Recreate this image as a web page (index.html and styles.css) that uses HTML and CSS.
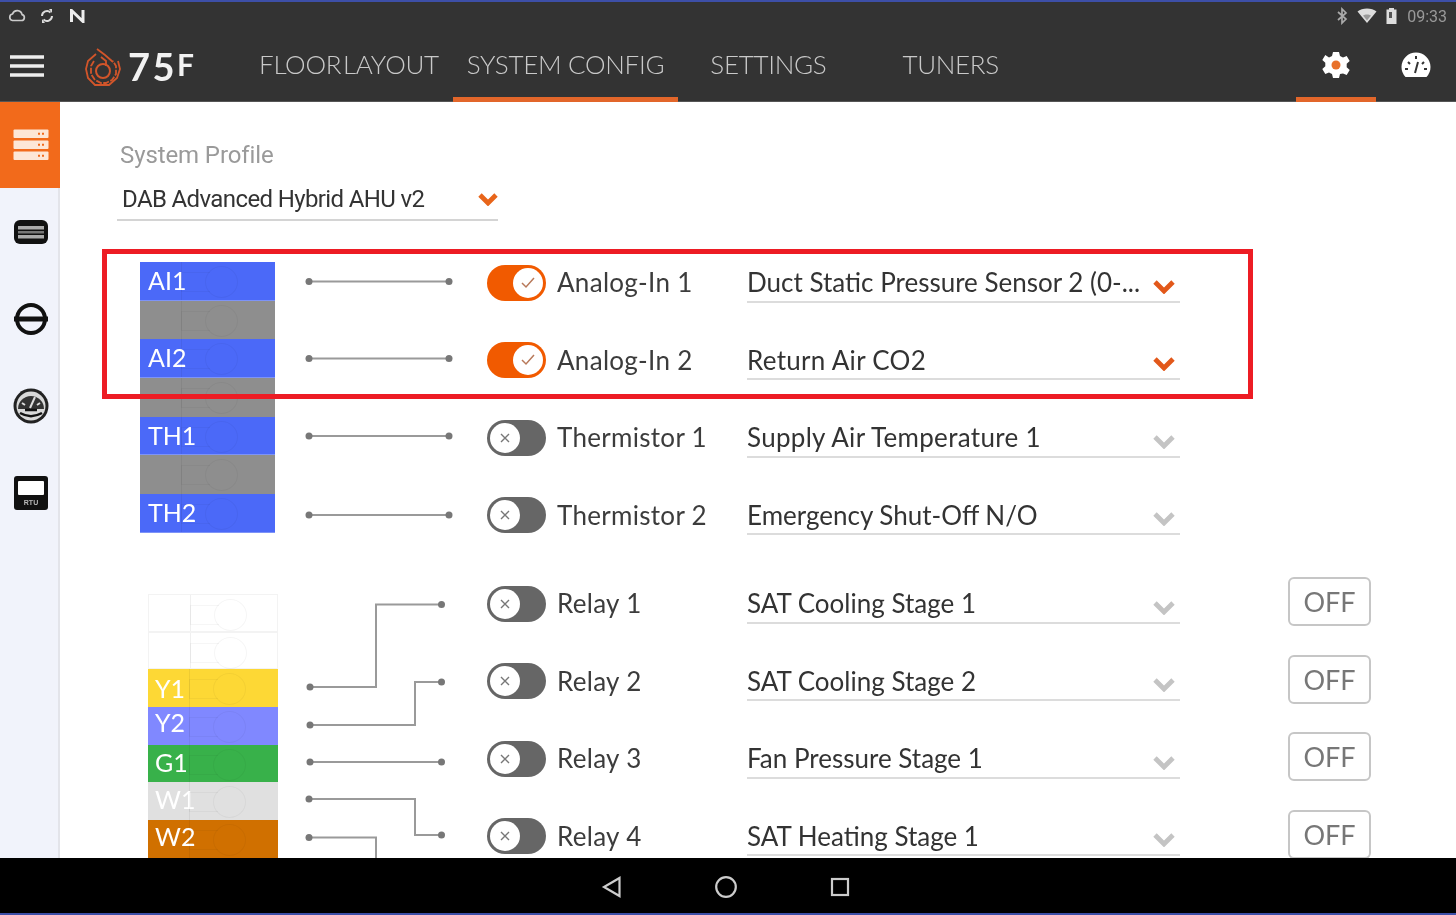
FILE: index.html
```html
<!DOCTYPE html>
<html lang="en">
<head>
<meta charset="utf-8">
<title>75F System Config</title>
<link rel="stylesheet" href="styles.css">
</head>
<body>
<div class="screen">
  <div class="statusbar">
    <div class="status-group">
      <svg class="st-icon" width="18" height="14" viewBox="0 0 18 14"><path d="M4.500 11.500h9a3 3 0 0 0 .6-5.900 5 5 0 0 0-9.600-.6 3.300 3.300 0 0 0 0 6.500z" fill="none" stroke="#ccc" stroke-width="1.700"/></svg>
      <svg class="st-icon" width="16" height="16" viewBox="0 0 16 16"><path d="M3 8a5 5 0 0 1 8.500-3.500M13 8a5 5 0 0 1-8.500 3.500" fill="none" stroke="#ddd" stroke-width="2"/><path d="M10 1l3 0 0 4zM6 15l-3 0 0-4z" fill="#ddd"/></svg>
      <svg class="st-icon st-n" width="16" height="14" viewBox="0 0 16 14"><path d="M1.500 13V1.500L13 12.500V1" fill="none" stroke="#eee" stroke-width="3"/></svg>
    </div>
    <div class="status-group status-right">
      <svg width="12" height="18" viewBox="0 0 12 18"><path d="M2 5l8 7-4 4V2l4 4-8 7" fill="none" stroke="#aaa" stroke-width="1.700"/></svg>
      <svg width="20" height="16" viewBox="0 0 20 16"><path d="M0.500 3.500C5 -0.500 15 -0.500 19.500 3.500L10 15z" fill="#ddd"/><path d="M6 7.500c2-1.500 6-1.500 8 0L10 12.500z" fill="#999"/></svg>
      <svg width="11" height="18" viewBox="0 0 11 18"><path d="M3 1h5v1.500h2.500V17H.5V2.500H3z" fill="#ddd"/><rect x="3" y="5" width="3" height="6" fill="#555"/></svg>
      <span class="clock">09:33</span>
    </div>
  </div>

  <header class="appbar">
    <svg class="menu" width="34" height="22" viewBox="0 0 34 22"><path d="M0 2h34M0 11h34M0 20h34" stroke="#eee" stroke-width="3.600"/></svg>
    <svg class="logo" width="36" height="44" viewBox="0 0 36 44">
      <path d="M12 4l8 6 8 7" fill="none" stroke="#d2552a" stroke-width="1.800"/>
      <path d="M11 9L3 16 1 24l2 9 7 7h14l8-7 3-9-2-8" fill="none" stroke="#d2552a" stroke-width="1.800"/>
      <path d="M9 16l-3 5v8l4 6 6 3h5l6-3 4-6v-8l-3-5" fill="none" stroke="#d2552a" stroke-width="1.800" stroke-dasharray="6 1.500"/>
      <circle cx="18" cy="26" r="7" fill="none" stroke="#d2552a" stroke-width="2"/>
      <path d="M16 12l5 4v5" fill="none" stroke="#d2552a" stroke-width="1.800"/>
    </svg>
    <div class="brand">75<span class="brand-f">F</span></div>
    <nav class="tabs">
      <a class="tab tab-floor">FLOOR LAYOUT</a>
      <a class="tab tab-active">SYSTEM CONFIG</a>
      <a class="tab tab-settings">SETTINGS</a>
      <a class="tab tab-tuners">TUNERS</a>
    </nav>
    <div class="actions">
      <div class="action action-active">
        <svg width="30" height="30" viewBox="0 0 30 30"><path d="M12 2h6l1 4 3 1.500 3.700-1.500 3 5-3 2.700v3.600l3 2.700-3 5-3.700-1.500L19 24l-1 4h-6l-1-4-3-1.500-3.700 1.500-3-5 3-2.700v-3.600l-3-2.700 3-5L8 7.500 11 6z" fill="#fff"/><circle cx="15" cy="15" r="4.500" fill="#e8712a"/></svg>
      </div>
      <div class="action">
        <svg width="30" height="26" viewBox="0 0 30 26"><path d="M4.500 25A14.500 14.500 0 1 1 25.500 25z" fill="#fff"/><path d="M14 21l3-11M7 10l2 2M23 10l-2 2M4 17h3M23 17h3M15 4v3" stroke="#333" stroke-width="2"/></svg>
      </div>
    </div>
  </header>

  <div class="main">
    <aside class="sidebar">
      <div class="side-item side-active">
        <svg width="36" height="32" viewBox="0 0 36 32">
          <rect x="0.500" y="0.500" width="35" height="8.500" rx="1" fill="#fde6d6"/>
          <rect x="0.500" y="11.500" width="35" height="8.500" rx="1" fill="#fde6d6"/>
          <rect x="0.500" y="22.500" width="35" height="8.500" rx="1" fill="#fde6d6"/>
          <path d="M25 4.800h2M29 4.800h2M25 15.800h2M29 15.800h2M25 26.800h2M29 26.800h2" stroke="#f26a1b" stroke-width="2"/>
        </svg>
      </div>
      <div class="side-item">
        <svg width="36" height="26" viewBox="0 0 36 26"><rect x="1" y="1" width="34" height="24" rx="6" fill="#111"/><rect x="5" y="7" width="26" height="3.500" fill="#aaa"/><rect x="5" y="12" width="26" height="2.500" fill="#777"/><rect x="5" y="16" width="26" height="3.500" fill="#aaa"/></svg>
      </div>
      <div class="side-item">
        <svg width="36" height="32" viewBox="0 0 36 32"><circle cx="18" cy="16" r="14" fill="none" stroke="#111" stroke-width="4"/><path d="M1 16h34" stroke="#111" stroke-width="5"/></svg>
      </div>
      <div class="side-item">
        <svg width="36" height="36" viewBox="0 0 36 36"><circle cx="18" cy="18" r="17.500" fill="#222"/><circle cx="18" cy="18" r="14.500" fill="#d8d8d8"/><path d="M5 21a13 13 0 0 1 26 0z" fill="#333"/><path d="M17 20l5-11M9 15l3 2M27 15l-3 2" stroke="#ddd" stroke-width="2"/><path d="M7 25c7 4 15 4 22 0M12 22h12" fill="none" stroke="#111" stroke-width="2.500"/></svg>
      </div>
      <div class="side-item">
        <svg width="36" height="36" viewBox="0 0 36 36"><rect x="1" y="1" width="34" height="34" rx="3" fill="#111"/><rect x="5" y="6" width="26" height="14" rx="1" fill="#fff"/><text x="18" y="30" text-anchor="middle" font-family="Liberation Sans" font-size="7" font-weight="700" fill="#bbb">RTU</text></svg>
      </div>
    </aside>

    <section class="content">
      <div class="profile">
        <div class="profile-label">System Profile</div>
        <div class="profile-select">
          <span>DAB Advanced Hybrid AHU v2</span>
          <svg class="chev" width="20" height="14" viewBox="0 0 20 14"><path d="M2 3l8 8 8-8" fill="none" stroke="#e8651a"/></svg>
        </div>
      </div>

      <div class="group group-analog">
        <div class="strip strip-analog">
          <div class="block blue">AI1</div>
          <div class="block grey"></div>
          <div class="block blue">AI2</div>
          <div class="block grey"></div>
          <div class="block blue">TH1</div>
          <div class="block grey"></div>
          <div class="block blue">TH2</div>
        </div>
        <svg class="wires wires-analog" width="212" height="310" viewBox="275 243 212 310">
          <g class="wire">
            <path d="M309 281.500H449M309 358.500H449M309 436H449M309 515H449"/>
          </g>
          <g class="pin">
            <circle cx="309" cy="281.500" r="3.500"/><circle cx="449" cy="281.500" r="3.500"/>
            <circle cx="309" cy="358.500" r="3.500"/><circle cx="449" cy="358.500" r="3.500"/>
            <circle cx="309" cy="436" r="3.500"/><circle cx="449" cy="436" r="3.500"/>
            <circle cx="309" cy="515" r="3.500"/><circle cx="449" cy="515" r="3.500"/>
          </g>
        </svg>
        <div class="rows">
          <div class="row">
            <div class="toggle on"><span class="knob"><svg width="16" height="14" viewBox="0 0 16 14"><path d="M2 7l4 4 8-9" fill="none" stroke="#b8795a" stroke-width="1.500"/></svg></span></div>
            <div class="label">Analog-In 1</div>
            <div class="select"><span>Duct Static Pressure Sensor 2 (0-...</span><svg class="chev" width="22" height="15" viewBox="0 0 22 15"><path d="M2 3l9 9 9-9" fill="none" stroke="#e2581a"/></svg></div>
          </div>
          <div class="row">
            <div class="toggle on"><span class="knob"><svg width="16" height="14" viewBox="0 0 16 14"><path d="M2 7l4 4 8-9" fill="none" stroke="#b8795a" stroke-width="1.500"/></svg></span></div>
            <div class="label">Analog-In 2</div>
            <div class="select"><span class="wide">Return Air CO2</span><svg class="chev" width="22" height="15" viewBox="0 0 22 15"><path d="M2 3l9 9 9-9" fill="none" stroke="#e2581a"/></svg></div>
          </div>
          <div class="row">
            <div class="toggle"><span class="knob"><svg width="12" height="12" viewBox="0 0 12 12"><path d="M2 2l8 8M10 2l-8 8" stroke="#777" stroke-width="1.400"/></svg></span></div>
            <div class="label">Thermistor 1</div>
            <div class="select"><span class="wide">Supply Air Temperature 1</span><svg class="chev" width="22" height="15" viewBox="0 0 22 15"><path d="M2 3l9 9 9-9" fill="none" stroke="#c4c4c4"/></svg></div>
          </div>
          <div class="row">
            <div class="toggle"><span class="knob"><svg width="12" height="12" viewBox="0 0 12 12"><path d="M2 2l8 8M10 2l-8 8" stroke="#777" stroke-width="1.400"/></svg></span></div>
            <div class="label">Thermistor 2</div>
            <div class="select"><span>Emergency Shut-Off N/O</span><svg class="chev" width="22" height="15" viewBox="0 0 22 15"><path d="M2 3l9 9 9-9" fill="none" stroke="#c4c4c4"/></svg></div>
          </div>
        </div>
      </div>

      <div class="group group-relay">
        <div class="strip strip-relay">
          <div class="block blank"></div>
          <div class="block blank"></div>
          <div class="block yellow">Y1</div>
          <div class="block violet">Y2</div>
          <div class="block green">G1</div>
          <div class="block silver">W1</div>
          <div class="block amber">W2</div>
        </div>
        <svg class="wires wires-relay" width="209" height="293" viewBox="278 565 209 293">
          <g class="wire">
            <path d="M310 687H376V604.500H441"/>
            <path d="M310 725H415V682H441"/>
            <path d="M310 762H441"/>
            <path d="M309 799H415V835H441"/>
            <path d="M309 837.500H376V860"/>
          </g>
          <g class="pin">
            <circle cx="441.500" cy="604.500" r="3.500"/><circle cx="310" cy="687" r="3.500"/>
            <circle cx="441.500" cy="682" r="3.500"/><circle cx="310" cy="725" r="3.500"/>
            <circle cx="441.500" cy="762" r="3.500"/><circle cx="310" cy="762" r="3.500"/>
            <circle cx="441.500" cy="835" r="3.500"/><circle cx="309" cy="799" r="3.500"/>
            <circle cx="309" cy="837.500" r="3.500"/>
          </g>
        </svg>
        <div class="rows">
          <div class="row">
            <div class="toggle"><span class="knob"><svg width="12" height="12" viewBox="0 0 12 12"><path d="M2 2l8 8M10 2l-8 8" stroke="#777" stroke-width="1.400"/></svg></span></div>
            <div class="label">Relay 1</div>
            <div class="select"><span>SAT Cooling Stage 1</span><svg class="chev" width="22" height="15" viewBox="0 0 22 15"><path d="M2 3l9 9 9-9" fill="none" stroke="#c4c4c4"/></svg></div>
            <button class="off">OFF</button>
          </div>
          <div class="row">
            <div class="toggle"><span class="knob"><svg width="12" height="12" viewBox="0 0 12 12"><path d="M2 2l8 8M10 2l-8 8" stroke="#777" stroke-width="1.400"/></svg></span></div>
            <div class="label">Relay 2</div>
            <div class="select"><span>SAT Cooling Stage 2</span><svg class="chev" width="22" height="15" viewBox="0 0 22 15"><path d="M2 3l9 9 9-9" fill="none" stroke="#c4c4c4"/></svg></div>
            <button class="off">OFF</button>
          </div>
          <div class="row">
            <div class="toggle"><span class="knob"><svg width="12" height="12" viewBox="0 0 12 12"><path d="M2 2l8 8M10 2l-8 8" stroke="#777" stroke-width="1.400"/></svg></span></div>
            <div class="label">Relay 3</div>
            <div class="select"><span>Fan Pressure Stage 1</span><svg class="chev" width="22" height="15" viewBox="0 0 22 15"><path d="M2 3l9 9 9-9" fill="none" stroke="#c4c4c4"/></svg></div>
            <button class="off">OFF</button>
          </div>
          <div class="row">
            <div class="toggle"><span class="knob"><svg width="12" height="12" viewBox="0 0 12 12"><path d="M2 2l8 8M10 2l-8 8" stroke="#777" stroke-width="1.400"/></svg></span></div>
            <div class="label">Relay 4</div>
            <div class="select"><span>SAT Heating Stage 1</span><svg class="chev" width="22" height="15" viewBox="0 0 22 15"><path d="M2 3l9 9 9-9" fill="none" stroke="#c4c4c4"/></svg></div>
            <button class="off">OFF</button>
          </div>
        </div>
      </div>
    </section>
    <div class="highlight"></div>
  </div>

  <footer class="navbar">
    <div class="nav-btn"><svg width="22" height="24" viewBox="0 0 22 24"><path d="M18.500 3v18L3 12z" fill="none" stroke="#ccc" stroke-width="2.200"/></svg></div>
    <div class="nav-btn"><svg width="24" height="24" viewBox="0 0 24 24"><circle cx="12" cy="12" r="9.800" fill="none" stroke="#ccc" stroke-width="2.200"/></svg></div>
    <div class="nav-btn"><svg width="22" height="22" viewBox="0 0 22 22"><rect x="3" y="3" width="16" height="16" fill="none" stroke="#ccc" stroke-width="2.200"/></svg></div>
  </footer>
</div>
</body>
</html>
```

FILE: styles.css
```css
* { box-sizing: border-box; }
html, body { margin: 0; padding: 0; background: #000; }
body { width: 1456px; height: 915px; overflow: hidden; font-family: "Lato", "Noto Sans", sans-serif; }

.screen {
  width: 1456px;
  height: 915px;
  display: flex;
  flex-direction: column;
  border-top: 2px solid #3d4fa8;
  border-bottom: 2px solid #3d4fa8;
  overflow: hidden;
  filter: blur(0.6px);
}

.statusbar {
  height: 28px;
  flex: none;
  background: #333;
  display: flex;
  justify-content: space-between;
  align-items: center;
  padding: 0 9px 0 8px;
}
.status-group { display: flex; align-items: center; gap: 13px; }
.st-n { margin-left: 2px; }
.status-right { gap: 9px; }
.clock { font-family: "Roboto", sans-serif; font-size: 16px; color: #999; margin-left: 1px; }

.appbar {
  height: 72px;
  flex: none;
  background: #333;
  display: flex;
  align-items: center;
  padding-left: 10px;
  box-shadow: inset 0 -1px 0 #555;
}
.menu { flex: none; }
.logo { flex: none; margin-left: 41px; margin-top: 2px; }
.brand {
  margin-left: 7px;
  width: 72px;
  color: #f2f2f2;
  font-family: "Lato", sans-serif;
  font-weight: 700;
  font-size: 38px;
  line-height: 1;
  letter-spacing: 2.500px;
}
.brand-f { font-size: 30px; vertical-align: 5px; }

.tabs { display: flex; align-self: stretch; margin-left: 45px; }
.tab {
  display: flex;
  align-items: center;
  padding: 1px 14px 0;
  border-bottom: 5px solid transparent;
  color: #c9c9c9;
  font-family: "Lato", sans-serif;
  font-weight: 300;
  font-size: 26px;
  letter-spacing: -0.3px;
  white-space: pre;
}
.tab-floor { word-spacing: -5px; }
.tab-active { border-bottom-color: #e2662a; }
.tab-settings { margin-left: 18px; }
.tab-tuners { margin-left: 48px; }

.actions { margin-left: auto; display: flex; align-self: stretch; }
.action {
  width: 80px;
  display: flex;
  align-items: center;
  justify-content: center;
  padding-top: 3px;
  border-bottom: 5px solid transparent;
}
.action-active { border-bottom-color: #e2662a; }

.main {
  height: 756px;
  flex: none;
  display: flex;
  position: relative;
  overflow: hidden;
  background: #fff;
}

.sidebar {
  width: 60px;
  flex: none;
  background: #f1f3fb;
  border-right: 2px solid #e3e4ea;
  display: flex;
  flex-direction: column;
}
.side-item {
  height: 87px;
  flex: none;
  display: flex;
  align-items: center;
  justify-content: center;
  padding-left: 3px;
}
.side-active { height: 86px; background: #f26a1b; border-right: 0; margin-right: -2px; padding-left: 1px; }

.content { flex: 1; min-width: 0; background: #fff; }

.profile { height: 141px; padding: 38px 0 0 60px; }
.profile-label {
  font-family: "Roboto", sans-serif;
  font-size: 24px;
  line-height: 30px;
  letter-spacing: -0.1px;
  color: #9a9a9a;
}
.profile-select {
  width: 381px;
  height: 51px;
  margin-left: -3px;
  padding: 9px 0 0 5px;
  border-bottom: 2px solid #d4d4d4;
  display: flex;
  justify-content: space-between;
  align-items: center;
  font-family: "Roboto", sans-serif;
  font-size: 24px;
  letter-spacing: -0.62px;
  color: #333;
}

.group { display: flex; align-items: flex-start; }
.group-analog { height: 310px; }
.group-relay { margin-top: 12px; }
.group-relay .rows { margin-top: -1px; }

.strip { flex: none; display: flex; flex-direction: column; }
.strip-analog { width: 135px; margin: 19px 0 0 80px; }
.strip-relay { width: 130px; margin: 29px 0 0 88px; }

.block {
  height: 38.700px;
  position: relative;
  padding-left: 8px;
  color: #fff;
  font-size: 25px;
  line-height: 37px;
  background-image: linear-gradient(rgba(0,0,0,.06), rgba(0,0,0,.06));
  background-size: 1px 100%;
  background-position: 41px 0;
  background-repeat: no-repeat;
}
.block::before {
  content: "";
  position: absolute;
  left: 41px;
  width: 28px;
  top: 10px;
  height: 18px;
  border: 1px solid rgba(0,0,0,.035);
  border-right: 0;
}
.block::after {
  content: "";
  position: absolute;
  left: 65px;
  top: 4px;
  width: 31px;
  height: 30px;
  border: 1px solid rgba(0,0,0,.04);
  border-radius: 50%;
}
.strip-relay .block { height: 37.700px; padding-left: 7px; line-height: 38px; }
.blue { background-color: #4b69f8; border-bottom: 1px solid #7d93f8; }
.grey { background-color: #8e8e8e; }
.blank { background-color: #fff; border: 1px solid #f3f3f3; }
.yellow { background-color: #fdd835; }
.strip-relay .violet { background-color: #8088ff; line-height: 30px; }
.strip-relay .green { background-color: #38b14a; line-height: 35px; }
.strip-relay .silver { background-color: #e0e0e0; line-height: 34px; }
.strip-relay .amber { background-color: #d07000; line-height: 33px; }

.wires { flex: none; display: block; }
.wire { fill: none; stroke: #9a9a9a; stroke-width: 2; }
.pin { fill: #777; }

.rows { flex: none; display: flex; flex-direction: column; }
.row { height: 77.500px; display: flex; align-items: center; }

.toggle {
  width: 59px;
  height: 36px;
  flex: none;
  margin-top: 2px;
  border-radius: 18px;
  background: #666;
  display: flex;
  align-items: center;
  padding: 0 3px;
  justify-content: flex-start;
}
.toggle.on { background: #f15a00; justify-content: flex-end; }
.knob {
  width: 30px;
  height: 30px;
  border-radius: 50%;
  background: #fff;
  display: flex;
  align-items: center;
  justify-content: center;
}

.label {
  width: 190px;
  flex: none;
  margin-left: 11px;
  font-size: 26px;
  letter-spacing: 0.3px;
  color: #3c3c3c;
  margin-top: 1px;
}
.select {
  width: 433px;
  height: 39px;
  flex: none;
  margin-top: 3px;
  border-bottom: 2px solid #dcdcdc;
  display: flex;
  align-items: center;
  justify-content: space-between;
  padding-right: 5px;
  font-size: 26px;
  color: #333;
  white-space: nowrap;
}
.select .wide { letter-spacing: 0.3px; }
.select .chev { margin-top: 8px; }
.chev path { stroke-width: 4.800; }

.off {
  width: 83px;
  height: 49px;
  flex: none;
  margin: -2px 0 0 108px;
  padding: 0;
  background: #fff;
  border: 2px solid #c6c6c6;
  border-radius: 6px;
  color: #777;
  font-family: "Lato", sans-serif;
  font-size: 27px;
}

.highlight {
  position: absolute;
  left: 102px;
  top: 147px;
  width: 1151px;
  height: 150px;
  border: 5px solid #ed1c24;
}

.navbar {
  flex: 1;
  background: #000;
  display: flex;
  align-items: center;
  justify-content: center;
  padding-right: 4px;
  padding-top: 2px;
}
.nav-btn { width: 114px; display: flex; justify-content: center; }
```
